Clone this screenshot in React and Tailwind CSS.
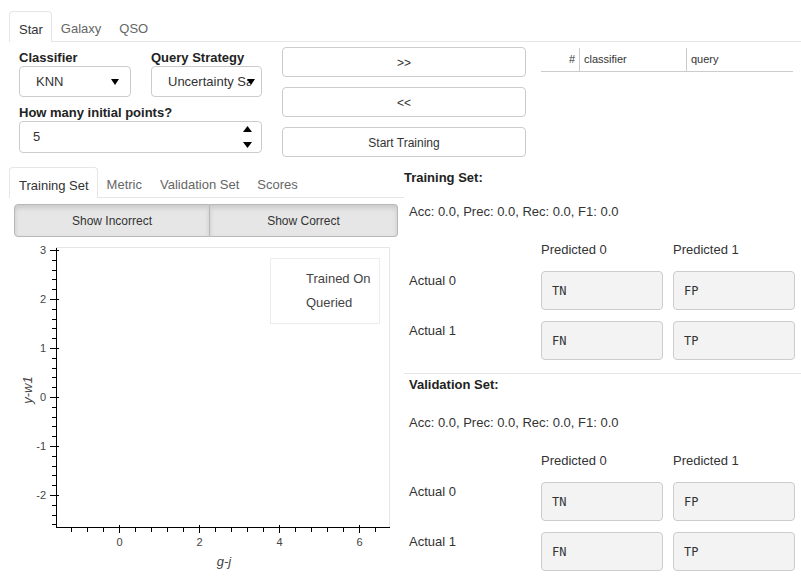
import React from 'react';

const Tabs = ({ items, active = 0, className = '' }) => (
  <div className={`flex ${className}`}>
    {items.map((label, i) => (
      <div
        key={label}
        className={
          i === active
            ? 'h-[31px] pt-[5px] pr-[8px] pl-[9px] flex items-center border border-b-0 border-[#e6e6e6] rounded-t-[4px] text-[#333]'
            : 'h-[31px] pt-[5px] px-[9px] flex items-center border-b border-[#e6e6e6] text-[#666]'
        }
      >
        {label}
      </div>
    ))}
    <div className="flex-1 border-b border-[#e6e6e6]" />
  </div>
);

const Caret = ({ up }) => (
  <svg width="9" height="6" viewBox="0 0 9 6">
    <polygon points={up ? '4.5,0 9,6 0,6' : '0,0 9,0 4.5,6'} fill="#000" />
  </svg>
);

const Select = ({ value, width, arrow }) => (
  <div className={`relative h-[31px] ${width} border border-[#ccc] rounded-[4px] bg-white flex items-center`}>
    <span className="flex-1 pl-[16px] mr-[10px] overflow-hidden whitespace-nowrap text-[#333]">{value}</span>
    <div className={`absolute ${arrow} top-0 bottom-0 flex items-center`}>
      <svg width="8" height="6" viewBox="0 0 8 6" className="block">
        <polygon points="0,0 8,0 4,6" fill="#000" />
      </svg>
    </div>
  </div>
);

const ConfusionMatrix = ({ title, titlePad, accGap }) => (
  <div className="flex flex-col">
    <div className={`h-[20px] leading-[20px] font-bold text-[#222] ${titlePad}`}>{title}</div>
    <div className={`h-[20px] leading-[20px] pl-[5px] ${accGap}`}>Acc: 0.0, Prec: 0.0, Rec: 0.0, F1: 0.0</div>
    <div className="flex mt-[18px] pl-[5px] h-[20px] leading-[20px]">
      <div className="w-[132px]" />
      <div className="w-[132px]">Predicted 0</div>
      <div>Predicted 1</div>
    </div>
    {[['Actual 0', 'TN', 'FP'], ['Actual 1', 'FN', 'TP']].map(([label, a, b]) => (
      <div key={label} className="flex pl-[5px] mt-[11px]">
        <div className="w-[132px] h-[20px] leading-[20px]">{label}</div>
        {[a, b].map((c, i) => (
          <div
            key={c}
            className={`h-[39px] w-[122px] ${i === 0 ? 'mr-[10px]' : ''} bg-[#f3f3f3] border border-[#ccc] rounded-[4px] flex items-center pl-[10px] font-['DejaVu_Sans_Mono',monospace] text-[12px] text-[#333]`}
          >
            {c}
          </div>
        ))}
      </div>
    ))}
  </div>
);

const Plot = () => {
  const Y = (v) => 157 - 49 * v;
  const X = (v) => 119 + 40 * v;
  const yMinor = [];
  for (let k = -13; k <= 15; k++) if (k % 5 !== 0) yMinor.push(k / 5);
  const xMinor = [];
  for (let k = -3; k <= 16; k++) if (k % 5 !== 0) xMinor.push(k * 0.4);
  return (
    <svg width="400" height="339" className="block">
      <rect x="56.5" y="7.5" width="333" height="280" fill="none" stroke="#e6e6e6" />
      <line x1="56.5" y1="8" x2="56.5" y2="288" stroke="#000" />
      <line x1="56" y1="287.5" x2="390" y2="287.5" stroke="#000" />
      {yMinor.map((v) => (
        <line key={v} x1="52" x2="56.5" y1={Math.round(Y(v)) + 0.5} y2={Math.round(Y(v)) + 0.5} stroke="#000" />
      ))}
      {[3, 2, 1, 0, -1, -2].map((v) => (
        <g key={v}>
          <line x1="50" x2="59" y1={Y(v) + 0.5} y2={Y(v) + 0.5} stroke="#000" />
          <text x="46" y={Y(v) + 4} textAnchor="end" fontSize="11" fill="#444">{v}</text>
        </g>
      ))}
      {xMinor.map((v) => (
        <line key={v} y1="287.5" y2="292" x1={Math.round(X(v)) + 0.5} x2={Math.round(X(v)) + 0.5} stroke="#000" />
      ))}
      {[0, 2, 4, 6].map((v) => (
        <g key={v}>
          <line y1="285" y2="293" x1={X(v) + 0.5} x2={X(v) + 0.5} stroke="#000" />
          <text x={X(v) + 0.5} y="306" textAnchor="middle" fontSize="11" fill="#444">{v}</text>
        </g>
      ))}
      <text x="224" y="326" textAnchor="middle" fontSize="13" fontStyle="italic" fill="#444">g-j</text>
      <text x="32" y="150" textAnchor="middle" fontSize="13" fontStyle="italic" fill="#444" transform="rotate(-90 32 150)">y-w1</text>
      <rect x="270.5" y="18.5" width="109" height="65" fill="#fff" stroke="#ececec" />
      <text x="306" y="43" fontSize="13" fill="#444">Trained On</text>
      <text x="306" y="67" fontSize="13" fill="#444">Queried</text>
    </svg>
  );
};

export default function App() {
  return (
    <div className="w-[801px] h-[579px] overflow-hidden bg-white text-[13px] text-[#333] font-['Liberation_Sans',Arial,sans-serif]">
      <Tabs items={['Star', 'Galaxy', 'QSO']} className="pt-[11px] pl-[9px]" />

      <div className="flex h-[125px]">
        <div className="w-[262px] pl-[19px] pt-[4px]">
          <div className="flex gap-[20px]">
            <div>
              <div className="h-[20px] leading-[24px] font-bold text-[#222]">Classifier</div>
              <Select value="KNN" width="w-[112px]" arrow="right-[11px]" />
            </div>
            <div>
              <div className="h-[20px] leading-[24px] font-bold text-[#222]">Query Strategy</div>
              <Select value="Uncertainty Sampling" width="w-[111px]" arrow="right-[6px]" />
            </div>
          </div>
          <div className="h-[20px] leading-[24px] font-bold text-[#222] mt-[4px]">How many initial points?</div>
          <div className="relative h-[32px] w-[243px] border border-[#ccc] rounded-[4px] flex items-center pl-[13px]">
            <span>5</span>
            <div className="absolute right-[9px] top-[4px] bottom-[4px] flex flex-col justify-between">
              <Caret up />
              <Caret />
            </div>
          </div>
        </div>

        <div className="w-[264px] pl-[20px] pt-[5px] flex flex-col gap-[10px]">
          {['>>', '<<', 'Start Training'].map((t) => (
            <button
              key={t}
              className="h-[30px] w-[244px] pt-[2px] border border-[#ccc] rounded-[4px] bg-white text-[12px] text-[#333]"
            >
              {t}
            </button>
          ))}
        </div>

        <div className="pl-[15px] pt-[5px]">
          <div className="flex h-[25px] w-[252px] pt-[1px] border-b border-[#ccc] text-[11px] text-[#333]">
            <div className="w-[39px] pr-[4px] flex items-center justify-end border-r border-[#ccc]">#</div>
            <div className="w-[107px] pl-[4px] flex items-center border-r border-[#ccc]">classifier</div>
            <div className="flex-1 pl-[4px] flex items-center">query</div>
          </div>
        </div>
      </div>

      <div className="flex">
        <div className="w-[404px]">
          <Tabs items={['Training Set', 'Metric', 'Validation Set', 'Scores']} className="pl-[9px]" />
          <div className="flex ml-[14px] mt-[6px] w-[384px] h-[33px] text-[12px] text-[#333]">
            <div className="w-[196px] flex items-center justify-center bg-[#e6e6e6] border border-[#b8b8b8] rounded-l-[4px] shadow-[inset_0_3px_5px_rgba(0,0,0,0.125)]">
              Show Incorrect
            </div>
            <div className="flex-1 flex items-center justify-center bg-[#e6e6e6] border border-l-0 border-[#b8b8b8] rounded-r-[4px] shadow-[inset_0_3px_5px_rgba(0,0,0,0.125)]">
              Show Correct
            </div>
          </div>
          <div className="mt-[3px]">
            <Plot />
          </div>
        </div>

        <div className="flex-1 flex flex-col">
          <ConfusionMatrix title="Training Set:" titlePad="pt-[1px]" accGap="mt-[15px]" />
          <div className="mt-[13px] border-t border-[#e6e6e6]" />
          <div className="mt-[1px]">
            <ConfusionMatrix title="Validation Set:" titlePad="pl-[5px]" accGap="mt-[18px]" />
          </div>
        </div>
      </div>
    </div>
  );
}
